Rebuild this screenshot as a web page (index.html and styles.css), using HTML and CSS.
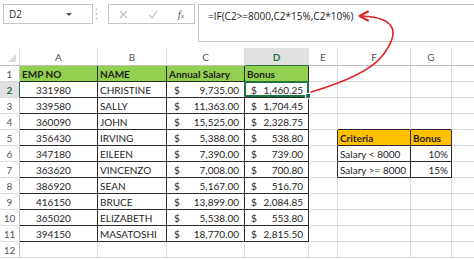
FILE: index.html
```html
<!DOCTYPE html>
<html lang="en">
<head>
    <meta charset="UTF-8">
    <meta name="viewport" content="width=device-width, initial-scale=1.0">
    <title>Employee Bonus</title>
    <link rel="stylesheet" href="styles.css">
</head>
<body>
    <div class="formula-bar">
        <div class="name-box">D2 <span class="caret"></span></div>
        <div class="grip">
            <svg width="3" height="12" viewBox="0 0 3 12"><circle cx="1.5" cy="1.5" r="1"/><circle cx="1.5" cy="6" r="1"/><circle cx="1.5" cy="10.5" r="1"/></svg>
        </div>
        <div class="fn-box">
            <svg class="fn-icon" width="9" height="9" viewBox="0 0 9 9"><path d="M1 1 L8 8 M8 1 L1 8"/></svg>
            <svg class="fn-icon" width="10" height="9" viewBox="0 0 10 9"><path d="M1 5 L4 8 L9 1"/></svg>
            <span class="fx">f<sub>x</sub></span>
        </div>
        <div class="formula">=IF(C2&gt;=8000,C2*15%,C2*10%)</div>
    </div>

    <table class="sheet">
        <colgroup>
            <col style="width:20px"><col style="width:78px"><col style="width:69px"><col style="width:78px"><col style="width:64px">
            <col style="width:29px"><col style="width:73px"><col style="width:41px"><col style="width:40px">
        </colgroup>
        <tr class="col-heads">
            <th class="corner"><span class="tri"></span></th>
            <th>A</th><th>B</th><th>C</th><th class="sel-col">D</th><th>E</th><th>F</th><th>G</th><th></th>
        </tr>
        <tr>
            <th class="row-head">1</th>
            <td class="box head">EMP NO</td><td class="box head">NAME</td><td class="box head">Annual Salary</td><td class="box head">Bonus</td>
            <td></td><td></td><td></td><td></td>
        </tr>
        <tr>
            <th class="row-head sel-row">2</th>
            <td class="box id">331980</td><td class="box">CHRISTINE</td>
            <td class="box money"><span class="cur">$</span>9,735.00</td>
            <td class="box money bonus active"><span class="cur">$</span>1,460.25</td>
            <td></td><td></td><td></td><td></td>
        </tr>
        <tr>
            <th class="row-head">3</th>
            <td class="box id">339580</td><td class="box">SALLY</td>
            <td class="box money"><span class="cur">$</span>11,363.00</td>
            <td class="box money bonus"><span class="cur">$</span>1,704.45</td>
            <td></td><td></td><td></td><td></td>
        </tr>
        <tr>
            <th class="row-head">4</th>
            <td class="box id">360090</td><td class="box">JOHN</td>
            <td class="box money"><span class="cur">$</span>15,525.00</td>
            <td class="box money bonus"><span class="cur">$</span>2,328.75</td>
            <td></td><td class="over"></td><td class="over"></td><td></td>
        </tr>
        <tr>
            <th class="row-head">5</th>
            <td class="box id">356430</td><td class="box">IRVING</td>
            <td class="box money"><span class="cur">$</span>5,388.00</td>
            <td class="box money bonus"><span class="cur">$</span>538.80</td>
            <td class="beside"></td><td class="box crit">Criteria</td><td class="box crit">Bonus</td><td></td>
        </tr>
        <tr>
            <th class="row-head">6</th>
            <td class="box id">347180</td><td class="box">EILEEN</td>
            <td class="box money"><span class="cur">$</span>7,390.00</td>
            <td class="box money bonus"><span class="cur">$</span>739.00</td>
            <td class="beside"></td><td class="box">Salary &lt; 8000</td><td class="box pct">10%</td><td></td>
        </tr>
        <tr>
            <th class="row-head">7</th>
            <td class="box id">363620</td><td class="box">VINCENZO</td>
            <td class="box money"><span class="cur">$</span>7,008.00</td>
            <td class="box money bonus"><span class="cur">$</span>700.80</td>
            <td class="beside"></td><td class="box">Salary &gt;= 8000</td><td class="box pct">15%</td><td></td>
        </tr>
        <tr>
            <th class="row-head">8</th>
            <td class="box id">386920</td><td class="box">SEAN</td>
            <td class="box money"><span class="cur">$</span>5,167.00</td>
            <td class="box money bonus"><span class="cur">$</span>516.70</td>
            <td></td><td></td><td></td><td></td>
        </tr>
        <tr>
            <th class="row-head">9</th>
            <td class="box id">416150</td><td class="box">BRUCE</td>
            <td class="box money"><span class="cur">$</span>13,899.00</td>
            <td class="box money bonus"><span class="cur">$</span>2,084.85</td>
            <td></td><td></td><td></td><td></td>
        </tr>
        <tr>
            <th class="row-head">10</th>
            <td class="box id">365020</td><td class="box">ELIZABETH</td>
            <td class="box money"><span class="cur">$</span>5,538.00</td>
            <td class="box money bonus"><span class="cur">$</span>553.80</td>
            <td></td><td></td><td></td><td></td>
        </tr>
        <tr>
            <th class="row-head">11</th>
            <td class="box id">394150</td><td class="box">MASATOSHI</td>
            <td class="box money"><span class="cur">$</span>18,770.00</td>
            <td class="box money bonus"><span class="cur">$</span>2,815.50</td>
            <td></td><td></td><td></td><td></td>
        </tr>
        <tr>
            <th class="row-head">12</th>
            <td></td><td></td><td></td><td></td><td></td><td></td><td></td><td></td>
        </tr>
    </table>

    <!-- arrow from the selected cell up to the formula -->
    <svg class="arrow" width="474" height="260" viewBox="0 0 474 260">
        <path d="M311 92 C335 85 370 72 383 55 C398 35 400 18 362 16"/>
        <polyline points="368,11.5 359.5,16 368,20.5"/>
    </svg>
</body>
</html>
```

FILE: styles.css
```css
body {
    margin: 0;
    width: 474px;
    height: 260px;
    overflow: hidden;
    position: relative;
    background-color: #fff;
    font-family: Lato, "Open Sans", sans-serif;
    color: #1e1e1e;
}

/* formula bar */
.formula-bar {
    display: flex;
    align-items: flex-start;
    height: 48px;
    padding: 4px 0 0 3px;
    box-sizing: border-box;
}
.name-box {
    width: 90px;
    height: 20px;
    box-sizing: border-box;
    border: 1px solid #c6c6c6;
    display: flex;
    align-items: center;
    justify-content: space-between;
    padding: 0 20px 0 5px;
    font-family: "Open Sans", sans-serif;
    font-size: 10px;
    color: #333;
}
.caret {
    border-left: 3px solid transparent;
    border-right: 3px solid transparent;
    border-top: 3px solid #555;
}
.grip {
    width: 15px;
    height: 20px;
    display: flex;
    align-items: center;
    padding-left: 2px;
    box-sizing: border-box;
}
.grip svg {
    fill: #c4c4c4;
}
.fn-box {
    width: 87px;
    height: 20px;
    box-sizing: border-box;
    border: 1px solid #c6c6c6;
    display: flex;
    align-items: center;
    justify-content: space-around;
}
.fn-icon {
    fill: none;
    stroke: #bdbdbd;
    stroke-width: 1.1;
}
.fx {
    font-family: "Liberation Serif", serif;
    font-style: italic;
    font-size: 11px;
    color: #555;
}
.fx sub {
    font-size: 7px;
    vertical-align: 0;
}
.formula {
    flex: 1;
    height: 38px;
    margin-left: 3px;
    box-sizing: border-box;
    border: 1px solid #c6c6c6;
    border-right: none;
    padding: 4px 0 0 9px;
    font-family: "Open Sans", sans-serif;
    font-size: 10px;
    line-height: 14px;
    color: #222;
}

/* grid */
.sheet {
    border-collapse: separate;
    border-spacing: 0;
    table-layout: fixed;
    width: 492px;
    font-size: 10px;
}
.sheet tr {
    height: 16px;
}
.sheet tr.col-heads {
    height: 18px;
}
.sheet th,
.sheet td {
    padding: 0 2px;
    border-right: 1px solid #dadada;
    border-bottom: 1px solid #dadada;
    white-space: nowrap;
    overflow: hidden;
    line-height: 14px;
}
.col-heads th {
    font-weight: normal;
    color: #555;
    border-bottom-color: #c0c0c0;
}
.corner {
    position: relative;
}
.tri {
    position: absolute;
    right: 3px;
    bottom: 3px;
    border-left: 8px solid transparent;
    border-bottom: 8px solid #dcdcdc;
}
.sel-col {
    background-color: #e1e1e1;
    color: #217346 !important;
    font-weight: bold !important;
    border-bottom: 1px solid #217346 !important;
}
.row-head {
    font-weight: normal;
    color: #555;
    text-align: center;
    border-right-color: #c0c0c0 !important;
    padding: 0 !important;
}
.sel-row {
    background-color: #e1e1e1;
    color: #217346;
    font-weight: bold;
    border-right-color: #217346 !important;
}

/* bordered ranges */
.sheet td.box {
    border-right-color: #2a2a2a;
    border-bottom-color: #2a2a2a;
}
.sheet td.beside {
    border-right-color: #2a2a2a;
}
.sheet td.over {
    border-bottom-color: #2a2a2a;
}
.head {
    background-color: #92d050;
    font-weight: bold;
}
.crit {
    background-color: #ffc000;
    font-weight: bold;
}
.id {
    padding-left: 16px !important;
}
.money {
    text-align: right;
    padding: 0 5px 0 7px !important;
}
.money.bonus {
    padding-left: 6px !important;
}
.cur {
    float: left;
}
.pct {
    text-align: right;
    padding-right: 3px !important;
}

/* selected cell */
.active {
    position: relative;
    overflow: visible !important;
}
.active::after {
    content: "";
    position: absolute;
    top: -1px;
    left: -1px;
    right: -1px;
    bottom: 0;
    border: 2px solid #217346;
}
.active::before {
    content: "";
    position: absolute;
    right: -3px;
    bottom: -2px;
    width: 4px;
    height: 4px;
    background-color: #217346;
    border: 1px solid #fff;
    z-index: 1;
}

.arrow {
    position: absolute;
    top: 0;
    left: 0;
    pointer-events: none;
}
.arrow path,
.arrow polyline {
    fill: none;
    stroke: #e02424;
    stroke-width: 1.6;
    stroke-linecap: round;
    stroke-linejoin: round;
}
.arrow polyline {
    stroke-width: 2;
}
```
